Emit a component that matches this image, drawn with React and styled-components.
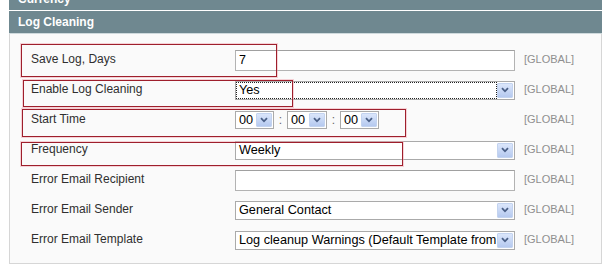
import React from 'react'
import styled, { createGlobalStyle } from 'styled-components'

const GlobalStyle = createGlobalStyle`
  html, body {
    margin: 0;
    padding: 0;
    background: #fff;
    overflow: hidden;
  }
  body {
    font-family: Arial, "Liberation Sans", Helvetica, sans-serif;
  }
`

const Page = styled.div`
  width: 602px;
  height: 271px;
  padding-left: 9px;
  box-sizing: border-box;
  overflow: hidden;
`

const SectionHead = styled.div`
  box-sizing: border-box;
  padding: 3px 0 0 9px;
  margin-top: ${(p) => (p.$cut ? '-12px' : '0')};
  border-top: ${(p) => (p.$cut ? 'none' : '1px solid #fff')};
  border-bottom: ${(p) => (p.$cut ? 'none' : '1px solid #cfdadd')};
  height: ${(p) => (p.$cut ? '22px' : '24px')};
  background: #6f8890;
  color: #fff;
  font-size: 12px;
  font-weight: bold;
  line-height: 16px;
`

const Panel = styled.div`
  position: relative;
  background: #fafafa;
  border: 1px solid #d6d6d6;
  border-top: none;
  padding: 11px 0 8px 21px;
`

const Row = styled.div`
  display: grid;
  grid-template-columns: 204px 280px auto;
  align-items: center;
  height: 30px;
`

const Label = styled.span`
  font-size: 12px;
  color: #2f2f2f;
  padding-bottom: 3px;
`

const Scope = styled.span`
  margin-left: 9px;
  font-size: 11px;
  color: #8f8f8f;
  padding-bottom: 2px;
`

const Input = styled.div`
  height: 21px;
  box-sizing: border-box;
  background: #fff;
  border: 1px solid #b3b3b3;
  border-top-color: #a0a0a0;
  font-size: 12.5px;
  line-height: 19px;
  padding-left: 3px;
  color: #000;
`

const SelectBox = styled.div`
  display: flex;
  align-items: stretch;
  height: ${(p) => p.$h || 19}px;
  width: ${(p) => (p.$w ? `${p.$w}px` : 'auto')};
  box-sizing: border-box;
  background: #fff;
  border: 1px solid #aaa;
  font-size: 12.7px;
  color: #000;
`

const SelectText = styled.span`
  flex: 1;
  min-width: 0;
  white-space: nowrap;
  overflow: hidden;
  line-height: ${(p) => (p.$focus ? '15px' : '17px')};
  margin: ${(p) => (p.$focus ? '1px 0 1px 1px' : '0')};
  outline: ${(p) => (p.$focus ? '1px dotted #222' : 'none')};
  padding-left: ${(p) => (p.$focus ? '2px' : '3px')};
`

const ArrowBox = styled.span`
  width: 16px;
  margin: 1px;
  display: flex;
  align-items: center;
  justify-content: center;
  background: linear-gradient(#dbe6fb, #b5c9ef);
  border: 1px solid #c3d3ef;
  box-sizing: border-box;
  border-radius: 1px;
`

const TimeGroup = styled.div`
  display: flex;
  align-items: center;
  gap: 4px;
`

const Colon = styled.span`
  font-size: 12px;
  color: #666;
  width: 5px;
  text-align: center;
`

const Mark = styled.div`
  position: absolute;
  border: 1px solid #9e1f2c;
  box-shadow: 0 0 0 1px rgba(240, 160, 170, 0.45);
  pointer-events: none;
`

const Chevron = () => (
  <svg width="8" height="6" viewBox="0 0 8 6">
    <path d="M1 1.2 L4 4.3 L7 1.2" fill="none" stroke="#4a5f86" strokeWidth="1.8" />
  </svg>
)

const Select = ({ value, focus, w, h }) => (
  <SelectBox $w={w} $h={h}>
    <SelectText $focus={focus}>{value}</SelectText>
    <ArrowBox>
      <Chevron />
    </ArrowBox>
  </SelectBox>
)

const marks = [
  { left: 11, top: 10, width: 254, height: 31 },
  { left: 13, top: 46, width: 268, height: 25 },
  { left: 12, top: 75, width: 382, height: 26 },
  { left: 11, top: 108, width: 380, height: 22 },
]

const App = () => (
  <Page>
    <GlobalStyle />
    <SectionHead $cut>Currency</SectionHead>
    <SectionHead>Log Cleaning</SectionHead>
    <Panel>
      <Row>
        <Label>Save Log, Days</Label>
        <Input>7</Input>
        <Scope>[GLOBAL]</Scope>
      </Row>
      <Row>
        <Label>Enable Log Cleaning</Label>
        <Select value="Yes" focus />
        <Scope>[GLOBAL]</Scope>
      </Row>
      <Row>
        <Label>Start Time</Label>
        <TimeGroup>
          <Select value="00" w={39} h={18} />
          <Colon>:</Colon>
          <Select value="00" w={40} h={18} />
          <Colon>:</Colon>
          <Select value="00" w={39} h={18} />
        </TimeGroup>
        <Scope>[GLOBAL]</Scope>
      </Row>
      <Row>
        <Label>Frequency</Label>
        <Select value="Weekly" />
        <Scope>[GLOBAL]</Scope>
      </Row>
      <Row>
        <Label>Error Email Recipient</Label>
        <Input />
        <Scope>[GLOBAL]</Scope>
      </Row>
      <Row>
        <Label>Error Email Sender</Label>
        <Select value="General Contact" />
        <Scope>[GLOBAL]</Scope>
      </Row>
      <Row>
        <Label>Error Email Template</Label>
        <Select value="Log cleanup Warnings (Default Template from Locale)" />
        <Scope>[GLOBAL]</Scope>
      </Row>
      {marks.map((m, i) => (
        <Mark key={i} style={m} />
      ))}
    </Panel>
  </Page>
)

export default App
